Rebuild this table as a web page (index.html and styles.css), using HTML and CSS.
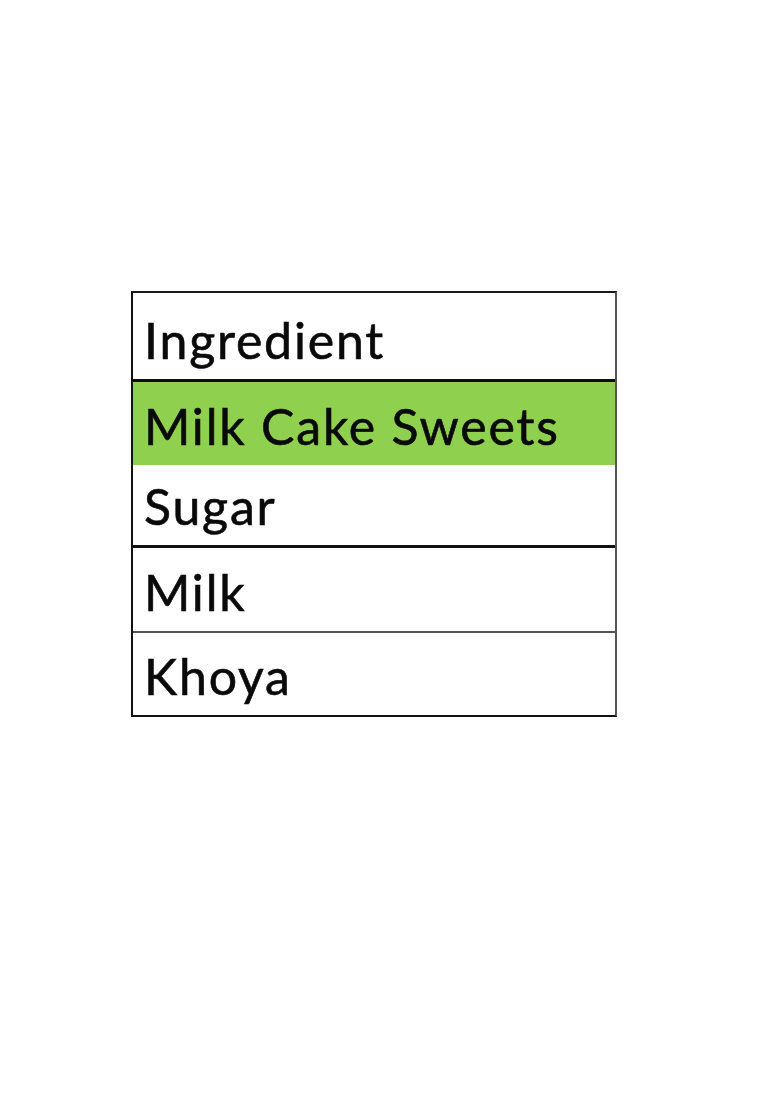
FILE: index.html
```html
<!DOCTYPE html>
<html>
<head>
<meta charset="utf-8">
<link rel="stylesheet" href="styles.css">
</head>
<body>
<div class="page">
  <div class="sheet">
    <div class="cell cell-head">Ingredient</div>
    <div class="cell cell-green">Milk Cake Sweets</div>
    <div class="cell cell-sugar">Sugar</div>
    <div class="cell cell-milk">Milk</div>
    <div class="cell cell-khoya">Khoya</div>
  </div>
</div>
</body>
</html>
```
FILE: styles.css
```css
html, body {
  margin: 0;
  padding: 0;
  background: #ffffff;
}
.page {
  width: 780px;
  height: 1108px;
  padding: 291px 0 0 131px;
  box-sizing: border-box;
}
.sheet {
  width: 486px;
  display: flex;
  flex-direction: column;
  border-top: 2px solid #1a1a1a;
  border-left: 2px solid #111111;
  border-right: 2px solid #555555;
  border-bottom: 2px solid #111111;
  box-sizing: border-box;
}
.cell {
  box-sizing: border-box;
  display: flex;
  align-items: flex-end;
  padding: 0 0 14px 11px;
  font-family: Lato, "Open Sans", sans-serif;
  font-size: 50px;
  letter-spacing: 1.8px;
  -webkit-text-stroke: 0.6px #0a0a0a;
  line-height: 1;
  color: #0a0a0a;
}
.cell-head {
  height: 89px;
  border-bottom: 3px solid #0d0d0d;
}
.cell-green {
  height: 83px;
  background: #8fd14f;
}
.cell-sugar {
  height: 83px;
  border-bottom: 3px solid #111111;
}
.cell-milk {
  height: 85px;
  border-bottom: 2px solid #555555;
}
.cell-khoya {
  height: 82px;
}
```
